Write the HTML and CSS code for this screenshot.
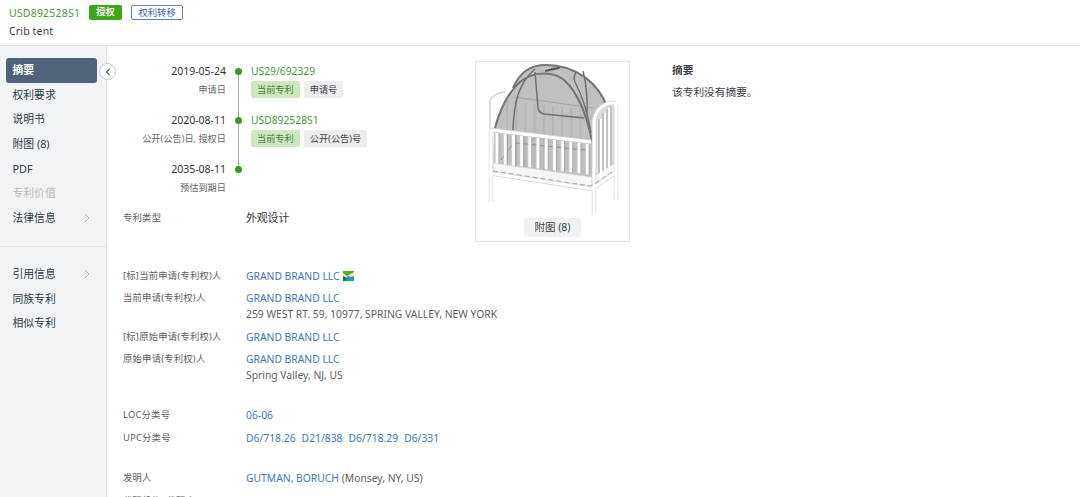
FILE: index.html
```html
<!DOCTYPE html>
<html lang="zh-CN">
<head>
<meta charset="utf-8">
<title>USD892528S1</title>
<link rel="stylesheet" href="styles.css">
</head>
<body>
<header class="header">
  <div class="heading"><a class="number">USD892528S1</a><span class="status">授权</span><span class="event">权利转移</span></div>
  <div class="title">Crib tent</div>
</header>
<div class="page">
  <nav class="sidebar">
    <button class="collapse"><svg width="16" height="16" viewBox="0 0 16 16"><path d="M9.6 4.8 6.4 8l3.2 3.2"/></svg></button>
    <div class="group">
      <a class="item active">摘要</a>
      <a class="item">权利要求</a>
      <a class="item">说明书</a>
      <a class="item">附图 (8)</a>
      <a class="item">PDF</a>
      <a class="item disabled">专利价值</a>
      <a class="item">法律信息<svg class="arrow" viewBox="0 0 6 10"><path d="m1 1 4 4-4 4"/></svg></a>
    </div>
    <div class="group second">
      <a class="item">引用信息<svg class="arrow" viewBox="0 0 6 10"><path d="m1 1 4 4-4 4"/></svg></a>
      <a class="item">同族专利</a>
      <a class="item">相似专利</a>
    </div>
  </nav>
  <main class="main">
    <section class="top">
      <div class="overview">
        <div class="timeline">
          <div class="event-row">
            <div class="when"><div class="date">2019-05-24</div><div class="note">申请日</div></div>
            <div class="rail"><i class="dot"></i></div>
            <div class="what"><a class="pub">US29/692329</a><div class="tags"><span class="tag current">当前专利</span><span class="tag">申请号</span></div></div>
          </div>
          <div class="event-row">
            <div class="when"><div class="date">2020-08-11</div><div class="note">公开(公告)日, 授权日</div></div>
            <div class="rail"><i class="dot"></i></div>
            <div class="what"><a class="pub">USD892528S1</a><div class="tags"><span class="tag current">当前专利</span><span class="tag">公开(公告)号</span></div></div>
          </div>
          <div class="event-row last">
            <div class="when"><div class="date">2035-08-11</div><div class="note">预估到期日</div></div>
            <div class="rail"><i class="dot"></i></div>
          </div>
        </div>
        <div class="field type"><span class="label">专利类型</span><span class="value design">外观设计</span></div>
      </div>
      <div class="figure">
        <svg class="crib" width="153" height="160" viewBox="476 62 153 160">
          <defs>
            <pattern id="slats" width="9.2" height="20" patternUnits="userSpaceOnUse"><path d="M1 0v20" stroke="#aaa" stroke-width="1"/></pattern>
            <pattern id="bars" x="493" width="8.2" height="200" patternUnits="userSpaceOnUse"><path d="M4 0v200" stroke="#fff" stroke-width="3"/><path d="M6 0v200" stroke="#999" stroke-width=".7"/></pattern>
          </defs>
          <path class="wood" d="M490 132v-31q3-8 15-9"/>
          <path class="mesh" d="M494 129C499 108 507 94 514 87 520 73 530 65 546 65c31 0 53 19 61 42v66l-15 11-99-13z"/>
          <path fill="url(#slats)" d="M505 100l80 10v70l-92-10z"/>
          <path class="seam" d="M514 97l80 11"/>
          <path class="front" d="M501 160l11-15 5-2 68 7"/>
          <path class="mattress" d="M493 163l99 14v11l-99-15z"/>
          <path fill="url(#bars)" d="M493 130l99 13v32l-99-12z"/>
          <path class="tent" d="M495 128C501 106 510 91 520 82 533 71 554 71 565 81c13 12 22 36 27 60M513 88C520 72 530 65 546 65c31 0 53 19 61 42"/>
          <path class="pole" d="M513 130c1-29 6-47 22-61M535 72l3 36q1 5 6 6l40 4M583 71q5 19 4 45M576 72q-3 6-1 10c7 13 12 28 16 51"/>
          <path class="dark" d="M545 71l14-3-8 1"/>
          <path class="end" d="M593 182v-65q4-15 22-15v69z"/>
          <path class="ribs" d="M599 119v58M603 113v62M607 109v63M611 106v64"/>
          <path class="mattress" d="M594 176l21-13v9l-21 15z"/>
          <path class="bar" d="M601 119v61M605 113v65M609 108v66"/>
          <path class="edge" d="M491 130l100 12M489 173l103 16 24-17M491 130v72M594 120v95M616 104v95M594 120q4-15 17-17h5"/>
          <path class="rail-fill" d="M491 130l100 12M489 173l103 16 24-17M491 130v72M594 120v95M616 104v95M594 120q4-15 17-17h5"/>
          <path class="base" d="M493 171l98 15 21-14"/>
        </svg>
        <span class="figure-link">附图 (8)</span>
      </div>
      <div class="abstract"><h2>摘要</h2><p>该专利没有摘要。</p></div>
    </section>
    <section class="fields owners">
      <div class="field"><span class="label">[标]当前申请(专利权)人</span><span class="value"><a>GRAND BRAND LLC</a><svg class="badge" viewBox="0 0 11 10"><path fill="#55ad27" d="M0 0h11v5H0z"/><path fill="#249abd" d="M0 5h11v5H0z"/><path fill="#e1ed94" d="m0 2 4 3 3-2 4-2v4L8 6 5 5 3 7 0 5z"/><path fill="#126d77" d="M0 5 4 7 2 10H0z"/></svg></span></div>
      <div class="field"><span class="label">当前申请(专利权)人</span><span class="value"><a>GRAND BRAND LLC</a><br>259 WEST RT. 59, 10977, SPRING VALLEY, NEW YORK</span></div>
      <div class="field"><span class="label">[标]原始申请(专利权)人</span><span class="value"><a>GRAND BRAND LLC</a></span></div>
      <div class="field"><span class="label">原始申请(专利权)人</span><span class="value"><a>GRAND BRAND LLC</a><br>Spring Valley, NJ, US</span></div>
    </section>
    <section class="fields classes">
      <div class="field"><span class="label">LOC分类号</span><span class="value"><a>06-06</a></span></div>
      <div class="field"><span class="label">UPC分类号</span><span class="value codes"><a>D6/718.26</a><a>D21/838</a><a>D6/718.29</a><a>D6/331</a></span></div>
    </section>
    <section class="fields inventors">
      <div class="field"><span class="label">发明人</span><span class="value"><a>GUTMAN, BORUCH</a> (Monsey, NY, US)</span></div>
      <div class="field"><span class="label">代理机构, 代理人</span></div>
    </section>
  </main>
</div>
</body>
</html>
```

FILE: styles.css
```css
* { box-sizing: border-box; }
body { margin: 0; height: 497px; overflow: hidden; background: #fff; color: #3b4249; font: 10.5px/16px "Noto Sans", "Noto Sans CJK SC", sans-serif; }
.header { height: 46px; padding: 4px 9px; border-bottom: 1px solid #e3e5e6; }
.heading { display: flex; align-items: center; height: 17px; }
.number, .pub { color: #4c9a3f; }
.number { letter-spacing: .2px; }
.pub { font-size: 10.3px; }
.status, .event { height: 15px; line-height: 14px; font-size: 9.3px; border-radius: 2px; text-align: center; }
.status { width: 33px; margin-left: 9px; background: #3fa51b; color: #fff; font-weight: 600; }
.event { width: 52px; margin-left: 9px; border: 1px solid #5b82c4; color: #3c68b4; line-height: 13px; }
.title { margin-top: 2px; letter-spacing: .15px; }
.page { display: flex; height: 451px; }
.sidebar { position: relative; width: 107px; flex: none; background: #f2f3f4; border-right: 1px solid #e2e4e6; }
.collapse { position: absolute; left: 99px; top: 17px; width: 17px; height: 17px; padding: 0; border: 1px solid #b8c5d8; border-radius: 50%; background: #fff; display: grid; place-items: center; }
.collapse path { fill: none; stroke: #486087; stroke-width: 1.2; }
.group { padding: 12px 9px 0 6px; height: 201px; border-bottom: 1px solid #e3e5e6; }
.group.second { padding-top: 15px; border: 0; }
.item { display: flex; align-items: center; justify-content: space-between; height: 24.6px; padding: 0 7px 0 6.5px; font-size: 10.8px; color: #2c3947; border-radius: 3px; }
.item.active { color: #fff; background: #52617a; font-weight: 600; }
.item.disabled { color: #b6babe; }
.arrow { width: 6px; height: 10px; fill: none; stroke: #aeb3b8; }
.main { flex: 1; padding-left: 16px; }
.top { display: flex; height: 218px; }
.overview { width: 352px; padding-top: 17px; }
.event-row { display: grid; grid-template-columns: 104px 23px 1fr; height: 49.2px; }
.when { text-align: right; }
.date { color: #333; margin-right: 1px; }
.note { margin: 3px 1px 0 0; font-size: 9.2px; line-height: 15px; color: #666; white-space: nowrap; }
.rail { display: flex; justify-content: center; padding-top: 4.5px; background: linear-gradient(#aaa, #aaa) 50% 10px / 1px 100% no-repeat; }
.event-row + .event-row .rail { background-position: 50% 0; }
.last .rail { background-size: 1px 8px; }
.dot { width: 7px; height: 7px; border-radius: 50%; background: #3a991b; }
.what { padding-left: 1px; }
.tags { display: flex; gap: 4px; margin-top: 2px; }
.tag { height: 17px; padding: 0 6px; line-height: 17px; font-size: 9.2px; background: #ededed; border-radius: 2px; }
.tag.current { background: #cde8bf; color: #45803b; }
.field { display: flex; }
.field.type { margin-top: -1px; }
.label { width: 123px; flex: none; font-size: 9.3px; letter-spacing: .25px; color: #606060; white-space: nowrap; }
.value { font-size: 10.34px; color: #606060; white-space: nowrap; }
.value a { color: #4476c8; }
.value.design { font-size: 10.8px; color: #333; }
.figure { width: 155px; height: 181px; margin-top: 15px; border: 1px solid #e3e4e5; position: relative; }
.crib { display: block; }
.crib path { stroke-linejoin: round; }
.wood, .seam, .front, .tent, .pole, .dark, .bar, .ribs, .edge, .rail-fill, .base { fill: none; }
.wood { stroke: #ddd; stroke-width: 2; }
.mesh { fill: #c0c0c0; }
.seam { stroke: #a5a5a5; }
.mattress { fill: #f5f5f5; stroke: #ccc; stroke-width: .7; }
.front { stroke: #909090; }
.tent { stroke: #747474; stroke-width: 2; }
.pole { stroke: #707070; stroke-width: 1.5; }
.dark { stroke: #555; stroke-width: 2; }
.end { fill: #ddd; }
.ribs { stroke: #a8a8a8; stroke-width: 1; }
.bar { stroke: #fff; stroke-width: 2; }
.edge { stroke: #cfcfcf; stroke-width: 4.4; }
.rail-fill { stroke: #fff; stroke-width: 3.2; }
.base { stroke: #aaa; stroke-width: 1; stroke-dasharray: 5 3; }
.figure-link { position: absolute; left: 48px; bottom: 4px; width: 57px; height: 19px; line-height: 19px; text-align: center; background: #f1f2f4; border-radius: 2px; }
.abstract { margin-left: 42px; padding-top: 16px; }
.abstract h2 { margin: 0 0 6px; font-size: 10.7px; line-height: 16px; font-weight: 700; }
.abstract p { margin: 0; font-size: 10.7px; }
.fields { display: grid; align-content: start; gap: 6.3px; }
.owners { padding-top: 4px; }
.classes { padding-top: 24.6px; }
.inventors { padding-top: 24.6px; }
.badge { width: 11px; height: 10px; margin-left: 3px; vertical-align: -1px; }
.codes { display: flex; gap: 6px; }
```
